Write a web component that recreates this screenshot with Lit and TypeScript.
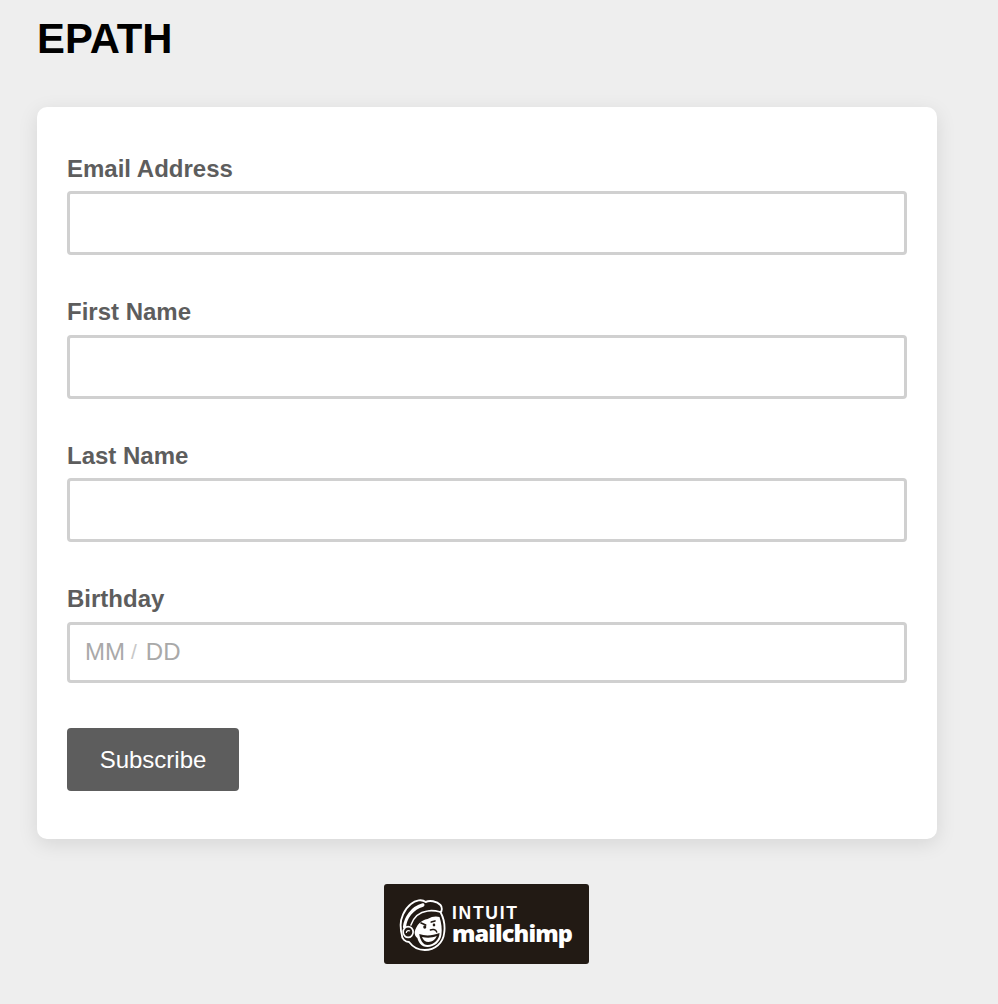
import { LitElement, html, css } from "lit";
import { customElement } from "lit/decorators.js";

@customElement("app-root")
export class AppRoot extends LitElement {
  static styles = css`
    :host { display: block; min-height: 1004px; background: #eeeeee; font-family: "Liberation Sans", Arial, sans-serif; box-sizing: border-box; padding: 0 61px 0 37px; overflow: hidden; }
    h1 { margin: 0; padding-top: 15px; height: 107px; box-sizing: border-box; font-size: 41.8px; line-height: 48px; font-weight: 700; color: #000; }
    .card { background: #fff; border-radius: 10px; box-shadow: 0 5px 20px rgba(0,0,0,.1); padding: 49px 30px 48px; height: 732px; box-sizing: border-box; }
    .field { display: flex; flex-direction: column; height: 143.5px; }
    label { display: block; flex: none; font-size: 24px; line-height: 26px; height: 35.25px; margin-top: -0.25px; font-weight: 700; color: #5d5d5d; }
    .input { display: block; flex: none; box-sizing: border-box; width: 100%; height: 64px; border: 3px solid #d0d0d0; border-radius: 4px; background: #fff; }
    .date { display: flex; align-items: center; height: 61px; padding-left: 15px; font-size: 24px; color: #a9a9a9; }
    .slash { color: #c8c8c8; font-size: 21px; margin: 0 9px 0 6px; }
    .bday { height: 141px; }
    button { display: block; width: 172px; height: 63px; padding: 2px 0 0; border: 0; border-radius: 4px; background: #5d5d5d; color: #fff; font: 400 24px "Liberation Sans", Arial, sans-serif; }
    .foot { display: flex; justify-content: center; padding: 45px 1px 0 0; }
    .badge { display: flex; align-items: center; width: 205px; height: 80px; box-sizing: border-box; padding: 0 0 0 14px; border-radius: 3px; background: #221a14; color: #fff; }
    .badge svg { display: block; width: 48px; height: 54px; flex: none; margin-right: 6px; }
    .words { display: flex; flex-direction: column; font-family: "Open Sans", sans-serif; font-weight: 800; padding-top: 2px; }
    .intuit { font-size: 17.5px; line-height: 16px; letter-spacing: 1.7px; font-weight: 600; font-family: "Liberation Sans", sans-serif; }
    .mc { font-size: 23.5px; line-height: 24px; letter-spacing: -0.9px; }
  `;

  render() {
    return html`
      <h1>EPATH</h1>
      <div class="card">
        <div class="field"><label>Email Address</label><div class="input"></div></div>
        <div class="field"><label>First Name</label><div class="input"></div></div>
        <div class="field"><label>Last Name</label><div class="input"></div></div>
        <div class="field bday"><label>Birthday</label>
          <div class="input date"><span>MM</span><span class="slash">/</span><span>DD</span></div>
        </div>
        <button>Subscribe</button>
      </div>
      <div class="foot">
        <div class="badge">
          <svg viewBox="0 0 52 54" preserveAspectRatio="none" aria-hidden="true">
            <path d="M3 30C2 22 7 12 14 7 19 3 26 2 30 5 34 3 42 4 46 8 48 10 48 14 46 15 50 22 51 30 50 36 49 46 40 53 29 53 22 53 16 50 12 45 8 45 4 42 4 37 3 35 3 32 3 30Z" fill="#221a14" stroke="#fff" stroke-width="2" stroke-linejoin="round"/>
            <path d="M7 30C8 21 15 11 27 8" fill="none" stroke="#fff" stroke-width="3.4" stroke-linecap="round"/>
            <path d="M14 28C17 20 24 15 32 14 37 13 42 14 46 15" fill="none" stroke="#fff" stroke-width="1.6" stroke-linecap="round"/>
            <path d="M18 35C20 28 25 23 32 22 37 19 42 19 45 20 47 26 48 32 47 38 46 45 39 50 32 50 25 50 22 45 21 41 19 40 18 38 18 35Z" fill="#fff"/>
            <circle cx="11" cy="35" r="5.4" fill="#221a14" stroke="#fff" stroke-width="1.8"/>
            <path d="M9 36c0-2 2-3 4-2" fill="none" stroke="#fff" stroke-width="1.3"/>
            <path d="M25 26l5 2M36 25l4-1" stroke="#221a14" stroke-width="1.8" stroke-linecap="round" fill="none"/>
            <circle cx="29" cy="30" r="1.7" fill="#221a14"/>
            <circle cx="39" cy="28" r="1.4" fill="#221a14"/>
            <path d="M35 33c2-1 6-1 7 2" stroke="#221a14" stroke-width="1.5" fill="none" stroke-linecap="round"/>
            <path d="M23 37c6 2 14 2 22-1 0 6-6 12-13 12-5 0-8-5-9-11Z" fill="#221a14"/>
            <path d="M26 40c5 1 11 1 16-1-1 3-5 6-9 6-3 0-6-2-7-5Z" fill="#fff"/>
          </svg>
          <div class="words"><span class="intuit">INTUIT</span><span class="mc">mailchimp</span></div>
        </div>
      </div>
    `;
  }
}
